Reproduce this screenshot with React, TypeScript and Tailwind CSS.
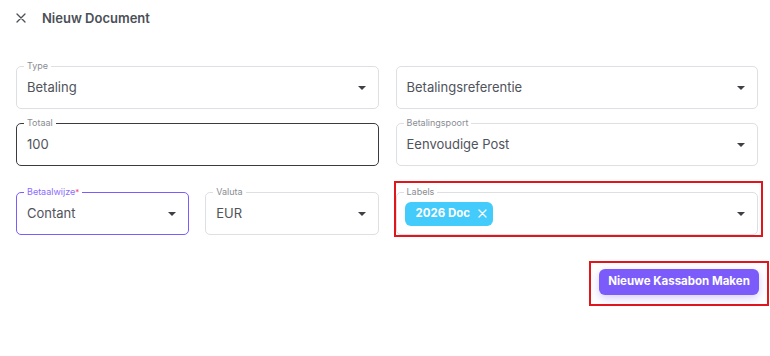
import { ReactNode } from "react";

function Caret() {
  return (
    <svg width="8" height="4" viewBox="0 0 8 4" className="shrink-0">
      <path d="M0 0 L8 0 L4 4 Z" fill="#3f3f46" />
    </svg>
  );
}

type FieldProps = {
  label?: string;
  value?: ReactNode;
  select?: boolean;
  variant?: "default" | "dark" | "focus";
  required?: boolean;
  className?: string;
};

function Field({ label, value, select = true, variant = "default", required, className = "" }: FieldProps) {
  const border =
    variant === "dark"
      ? "border-[#3a3a40]"
      : variant === "focus"
      ? "border-[#7c5cfa]"
      : "border-[#dedfe3]";
  const labelColor = variant === "focus" ? "text-[#8b6cff]" : "text-[#8a8d93]";

  return (
    <div className={`relative flex h-[43px] items-center rounded-[5px] border ${border} pl-[10px] pr-[12px] ${className}`}>
      {label && (
        <span className={`absolute -top-[7px] left-[7px] bg-white px-[3px] text-[9px] leading-[12px] ${labelColor}`}>
          {label}
          {required && <span className="align-top text-[8px] text-[#f43f75]">*</span>}
        </span>
      )}
      <div className="flex min-w-0 flex-1 items-center text-[13px] text-[#50535b]">{value}</div>
      {select && <Caret />}
    </div>
  );
}

export default function App() {
  return (
    <div className="h-[356px] w-[770px] bg-white font-['Inter',sans-serif]">
      {/* Header */}
      <div className="flex items-center pl-[16px] pt-[10px]">
        <svg width="10" height="10" viewBox="0 0 10 10" className="mr-[16px]">
          <path d="M1 1 L9 9 M9 1 L1 9" stroke="#4b4f57" strokeWidth="1.3" strokeLinecap="round" />
        </svg>
        <h1 className="text-[13px] font-semibold leading-[16px] text-[#4b4f57]">Nieuw Document</h1>
      </div>

      <div className="pl-[16px] pr-[12px] pt-[40px]">
        {/* Row 1 */}
        <div className="grid grid-cols-2 gap-x-[17px]">
          <Field label="Type" value="Betaling" />
          <Field value="Betalingsreferentie" />
        </div>

        {/* Row 2 */}
        <div className="mt-[14px] grid grid-cols-2 gap-x-[17px]">
          <Field label="Totaal" value="100" select={false} variant="dark" />
          <Field label="Betalingspoort" value="Eenvoudige Post" />
        </div>

        {/* Row 3 */}
        <div className="mt-[26px] grid grid-cols-2 gap-x-[17px]">
          <div className="grid grid-cols-2 gap-x-[16px]">
            <Field label="Betaalwijze" value="Contant" variant="focus" required />
            <Field label="Valuta" value="EUR" />
          </div>
          <div className="relative">
            <div className="pointer-events-none absolute -left-[2px] -right-[5px] -top-[11px] -bottom-[2px] border-2 border-[#e0161c]" />
            <Field
              label="Labels"
              value={
                <span className="-ml-[2px] flex h-[24px] items-center gap-[8px] rounded-[6px] bg-[#42cbfb] pl-[11px] pr-[6px] text-[11.5px] font-bold text-white">
                  2026 Doc
                  <svg width="9" height="9" viewBox="0 0 9 9">
                    <path d="M1 1 L8 8 M8 1 L1 8" stroke="white" strokeWidth="1.3" strokeLinecap="round" />
                  </svg>
                </span>
              }
            />
          </div>
        </div>

        {/* Action */}
        <div className="mt-[26px] flex justify-end">
          <div className="relative -mr-[11px] border-2 border-[#e0161c] pb-[9px] pl-[8px] pr-[8px] pt-[6px]">
            <button className="block h-[26px] w-[160px] rounded-[6px] bg-[#7b5cfa] text-[11.5px] font-bold text-white shadow-[0_3px_8px_rgba(123,92,250,0.3)]">
              Nieuwe Kassabon Maken
            </button>
          </div>
        </div>
      </div>
    </div>
  );
}
